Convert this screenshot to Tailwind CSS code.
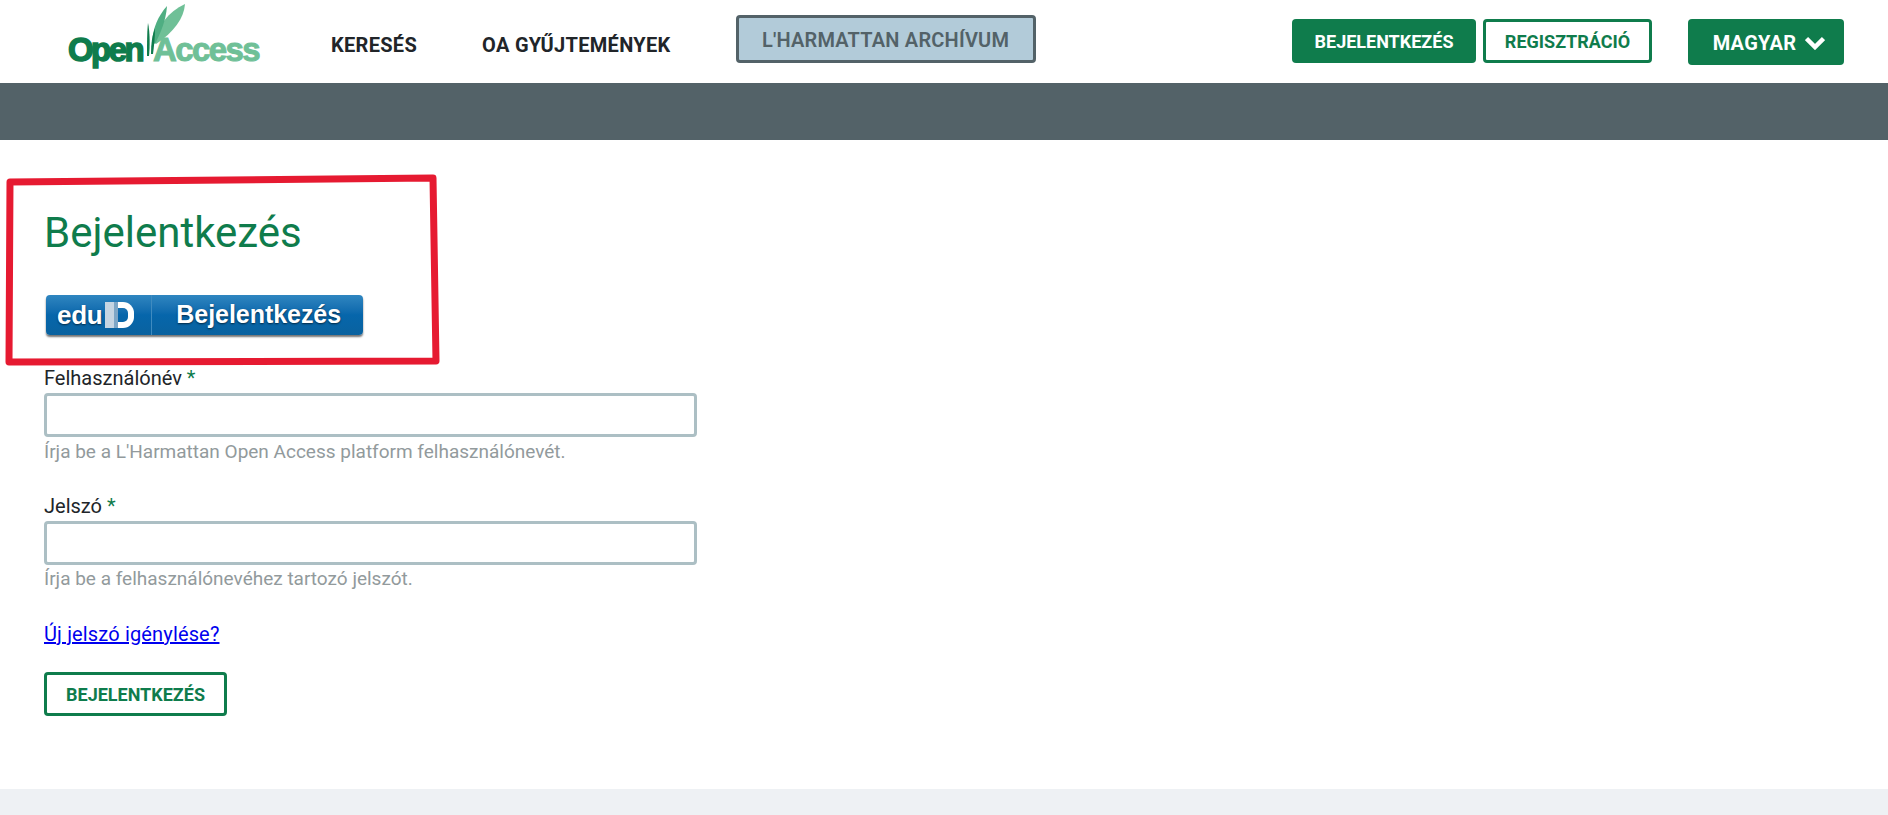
<!DOCTYPE html>
<html lang="hu">

<head>
  <meta charset="UTF-8" />
  <title>Bejelentkezés</title>
  <script src="https://cdn.jsdelivr.net/npm/@tailwindcss/browser@4"></script>
</head>

<body class="relative h-[815px] overflow-hidden bg-white font-['Roboto',sans-serif] text-[#212529]">
  <header class="flex h-[83px] items-start bg-white">
    <!-- logo -->
    <a class="relative ml-[68px] block h-[83px] w-[196px] shrink-0 font-['Liberation_Sans',sans-serif] text-[33px] font-bold">
      <svg class="absolute left-0 top-0" width="196" height="60" viewBox="0 0 196 60">
        <path d="M86 42C90 26 100 12 117 4C116 18 106 32 88 44Z" fill="#6fc097" />
        <path d="M84 42C85 28 90 16 99 6C98 20 93 32 87 44Z" fill="#4fae82" />
        <path d="M80 23C82 32 82 46 81 56L79 56C79 44 79 32 80 23Z" fill="#0f7c4c" />
        <path d="M83 54C83 44 84 36 87 28C87 38 86 46 85 54Z" fill="#0f7c4c" />
      </svg>
      <span class="absolute left-0 top-[25px] tracking-[-2.6px] text-[#0f7c4c] [-webkit-text-stroke:1.5px_#0f7c4c]">Open</span>
      <span class="absolute left-[85px] top-[25px] tracking-[-1.6px] text-[#6fc097] [-webkit-text-stroke:1px_#6fc097]">Access</span>
    </a>

    <nav class="ml-[67px] flex items-start">
      <a class="mt-[33px] text-[20px] font-bold leading-[24px] tracking-[0.3px] text-[#212529]">KERESÉS</a>
      <a class="ml-[65px] mt-[33px] text-[20px] font-bold leading-[24px] tracking-[0.3px] text-[#212529]">OA GYŰJTEMÉNYEK</a>
      <a class="ml-[65px] mt-[15px] flex h-[48px] w-[300px] items-center justify-center rounded-[4px] border-[3px] border-[#536268] bg-[#b2cbd9] pt-[1px] text-[20px] font-semibold tracking-[0.2px] text-[#536268]">L'HARMATTAN ARCHÍVUM</a>
    </nav>

    <div class="ml-auto mr-[44px] flex items-start">
      <a class="mt-[19px] flex h-[44px] w-[184px] items-center justify-center rounded-[4px] bg-[#0f7c4c] text-[18px] font-bold text-white">BEJELENTKEZÉS</a>
      <a class="ml-[7px] mt-[19px] flex h-[44px] w-[169px] items-center justify-center rounded-[4px] border-[3px] border-[#0f7c4c] bg-white text-[18px] font-bold text-[#0f7c4c]">REGISZTRÁCIÓ</a>
      <a class="ml-[36px] mt-[19px] flex h-[46px] w-[156px] items-center justify-center gap-[9px] rounded-[4px] bg-[#0f7c4c] pl-[6px] pt-[2px] text-[20px] font-bold tracking-[0.3px] text-white">
        MAGYAR
        <svg width="20" height="14" viewBox="0 0 20 14" fill="none" stroke="#fff" stroke-width="4.5">
          <path d="M1.5 2.5L10 11L18.5 2.5" />
        </svg>
      </a>
    </div>
  </header>

  <div class="h-[57px] bg-[#536268]"></div>

  <main class="h-[649px] pl-[44px]">
    <h1 class="pt-[69px] text-[42px] font-normal leading-[48px] text-[#0f7c4c]">Bejelentkezés</h1>

    <!-- eduID button -->
    <a class="ml-[2px] mt-[38px] flex h-[40px] w-[317px] items-center rounded-[4px] bg-gradient-to-b from-[#2f86c0] via-[#0666ab] to-[#0a629f] font-['Liberation_Sans',sans-serif] font-bold text-white shadow-[0_2px_2px_rgba(0,0,0,0.55)]">
      <span class="ml-[11px] text-[26px] tracking-[-0.3px] [text-shadow:0_1px_2px_rgba(0,0,0,0.6)]">edu</span>
      <span class="ml-[3px] h-[26px] w-[9px] bg-[#c6d5e2]"></span>
      <span class="h-[26px] w-[4px] bg-[#7ea6c6]"></span>
      <span class="h-[26px] w-[16px] rounded-r-[11px] border-[6px] border-l-0 border-white"></span>
      <span class="ml-[17px] h-full w-px bg-[#3f8bc0]"></span>
      <span class="ml-[24px] text-[25px] tracking-[-0.05px] [text-shadow:0_1px_2px_rgba(0,0,0,0.6)]">Bejelentkezés</span>
    </a>

    <form class="mt-[31px] w-[653px]">
      <label class="block text-[20px] leading-[24px]">Felhasználónév <span class="text-[#0f7c4c]">*</span></label>
      <input type="text" class="mt-[3px] block h-[44px] w-full rounded-[4px] border-[3px] border-[#acbfc4] bg-white" />
      <p class="mt-[4px] text-[19px] leading-[22px] text-[#929a9c]">Írja be a L'Harmattan Open Access platform felhasználónevét.</p>

      <label class="mt-[31px] block text-[20px] leading-[24px]">Jelszó <span class="text-[#0f7c4c]">*</span></label>
      <input type="password" class="mt-[3px] block h-[44px] w-full rounded-[4px] border-[3px] border-[#acbfc4] bg-white" />
      <p class="mt-[3px] text-[19px] leading-[22px] text-[#929a9c]">Írja be a felhasználónevéhez tartozó jelszót.</p>

      <a class="mt-[32px] block w-fit text-[20px] leading-[24px] tracking-[0.15px] text-[#0000ee] underline">Új jelszó igénylése?</a>
      <button type="button" class="mt-[26px] flex h-[44px] w-[183px] items-center justify-center rounded-[4px] border-[3px] border-[#0f7c4c] bg-white text-[18px] font-bold text-[#0f7c4c]">BEJELENTKEZÉS</button>
    </form>
  </main>

  <footer class="h-[26px] bg-[#eef1f4]"></footer>

  <!-- hand drawn red box on top of the page -->
  <svg class="pointer-events-none absolute left-0 top-0" width="450" height="380" viewBox="0 0 450 380" fill="none">
    <path d="M10 182L433 178L436 361L9 362Z" stroke="#e61a31" stroke-width="7" stroke-linejoin="round" />
  </svg>
</body>

</html>
